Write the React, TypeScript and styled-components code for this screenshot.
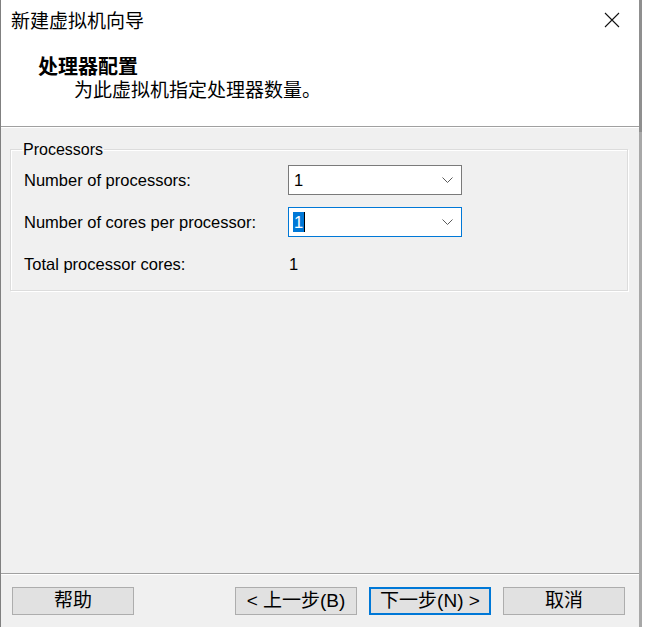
import React from "react";
import styled, { createGlobalStyle } from "styled-components";

const GlobalStyle = createGlobalStyle`
  html, body { margin: 0; padding: 0; background: #ffffff; }
  body {
    font-family: "Liberation Sans", "Noto Sans CJK SC", sans-serif;
    color: #000000;
  }
  #root { width: 646px; height: 627px; overflow: hidden; }
`;

const Screen = styled.div`
  display: flex;
  width: 646px;
  height: 627px;
  background: #ffffff;
`;

const Window = styled.div`
  display: flex;
  flex-direction: column;
  width: 639px;
  height: 627px;
  box-sizing: border-box;
  border-left: 1px solid #808080;
  background: #f0f0f0;
`;

const Edge = styled.div`
  display: flex;
  flex-direction: column;
  width: 3px;
  height: 627px;
`;

const EdgeSegment = styled.div<{ $dark?: boolean }>`
  background: ${(p) => (p.$dark ? "#8f8f8f" : "#a8a8a8")};
  flex: ${(p) => (p.$dark ? "0 0 132px" : "1 1 auto")};
`;

const Header = styled.header`
  height: 126px;
  background: #ffffff;
  display: flex;
  flex-direction: column;
`;

const TitleBar = styled.div`
  height: 40px;
  display: flex;
  align-items: center;
  justify-content: space-between;
  padding: 0 19px 0 10px;
`;

const WindowTitle = styled.div`
  font-family: "Noto Sans CJK SC", sans-serif;
  font-size: 19px;
  line-height: 24px;
  color: #000000;
`;

const CloseIcon = styled.svg`
  display: block;
  width: 16px;
  height: 16px;
`;

const Heading = styled.div`
  margin-top: 14px;
  padding-left: 37px;
  font-family: "Noto Sans CJK SC", sans-serif;
  font-weight: 700;
  font-size: 20px;
  line-height: 24px;
`;

const SubHeading = styled.div`
  padding-left: 73px;
  font-family: "Noto Sans CJK SC", sans-serif;
  font-size: 19px;
  line-height: 22px;
`;

const Separator = styled.div`
  height: 0;
  border-top: 1px solid #a0a0a0;
  border-bottom: 1px solid #ffffff;
`;

const Body = styled.main`
  flex: 1 1 auto;
  padding: 11px 11px 0 9px;
`;

const Group = styled.fieldset`
  margin: 0;
  padding: 5px 12px 11px 13px;
  border: 1px solid #dcdcdc;
  box-shadow: inset 1px 1px 0 #ffffff, 1px 1px 0 #ffffff;
  min-width: 0;
`;

const Legend = styled.legend`
  margin-left: -2px;
  padding: 1px 1px 0;
  font-size: 16px;
  line-height: 20px;
  color: #000000;
`;

const Grid = styled.div`
  display: grid;
  grid-template-columns: 264px 174px;
  grid-auto-rows: 30px;
  row-gap: 12px;
  align-items: center;
`;

const Label = styled.div`
  font-size: 16.5px;
  line-height: 20px;
`;

const Value = styled.div`
  padding-left: 1px;
  font-size: 16.5px;
  line-height: 20px;
`;

const Combo = styled.div<{ $focused?: boolean }>`
  display: flex;
  align-items: center;
  justify-content: space-between;
  box-sizing: border-box;
  width: 174px;
  height: 30px;
  padding: 0 8px 0 ${(p) => (p.$focused ? "4px" : "5px")};
  background: #ffffff;
  border: 1px solid ${(p) => (p.$focused ? "#0078d7" : "#7a7a7a")};
`;

const ComboText = styled.div`
  display: flex;
  align-items: center;
  font-size: 16.5px;
  line-height: 20px;
`;

const Selected = styled.span`
  background: #0078d7;
  color: #ffffff;
  padding: 0 1px;
`;

const Caret = styled.span`
  display: inline-block;
  width: 1px;
  height: 20px;
  background: #000000;
`;

const Chevron = styled.svg`
  display: block;
  width: 11px;
  height: 6px;
`;

const Footer = styled.footer`
  height: 52px;
  box-sizing: border-box;
  display: flex;
  align-items: flex-start;
  padding: 12px 14px 0 11px;
`;

const NavGroup = styled.div`
  margin-left: auto;
  display: flex;
  gap: 12px;
`;

const Button = styled.button<{ $primary?: boolean }>`
  box-sizing: border-box;
  width: 122px;
  height: 28px;
  padding: 0;
  margin: 0;
  background: #e1e1e1;
  border: ${(p) => (p.$primary ? "2px solid #0078d7" : "1px solid #adadad")};
  font-family: "Liberation Sans", "Noto Sans CJK SC", sans-serif;
  font-size: 19px;
  line-height: 24px;
  color: #000000;
  display: flex;
  align-items: center;
  justify-content: center;
`;

const ChevronDown = () => (
  <Chevron viewBox="0 0 11 6">
    <polyline points="0.5,0.5 5.5,5.5 10.5,0.5" fill="none" stroke="#5a5a5a" strokeWidth="1" />
  </Chevron>
);

export default function App() {
  return (
    <>
      <GlobalStyle />
      <Screen>
        <Window>
          <Header>
            <TitleBar>
              <WindowTitle>新建虚拟机向导</WindowTitle>
              <CloseIcon viewBox="0 0 16 16">
                <path d="M1 1 L15 15 M15 1 L1 15" stroke="#111" strokeWidth="1.1" fill="none" />
              </CloseIcon>
            </TitleBar>
            <Heading>处理器配置</Heading>
            <SubHeading>为此虚拟机指定处理器数量。</SubHeading>
          </Header>
          <Separator />
          <Body>
            <Group>
              <Legend>Processors</Legend>
              <Grid>
                <Label>Number of processors:</Label>
                <Combo>
                  <ComboText>1</ComboText>
                  <ChevronDown />
                </Combo>
                <Label>Number of cores per processor:</Label>
                <Combo $focused>
                  <ComboText>
                    <Selected>1</Selected>
                    <Caret />
                  </ComboText>
                  <ChevronDown />
                </Combo>
                <Label>Total processor cores:</Label>
                <Value>1</Value>
              </Grid>
            </Group>
          </Body>
          <Separator />
          <Footer>
            <Button>帮助</Button>
            <NavGroup>
              <Button>&lt; 上一步(B)</Button>
              <Button $primary>下一步(N) &gt;</Button>
              <Button>取消</Button>
            </NavGroup>
          </Footer>
        </Window>
        <Edge>
          <EdgeSegment $dark />
          <EdgeSegment />
        </Edge>
      </Screen>
    </>
  );
}
